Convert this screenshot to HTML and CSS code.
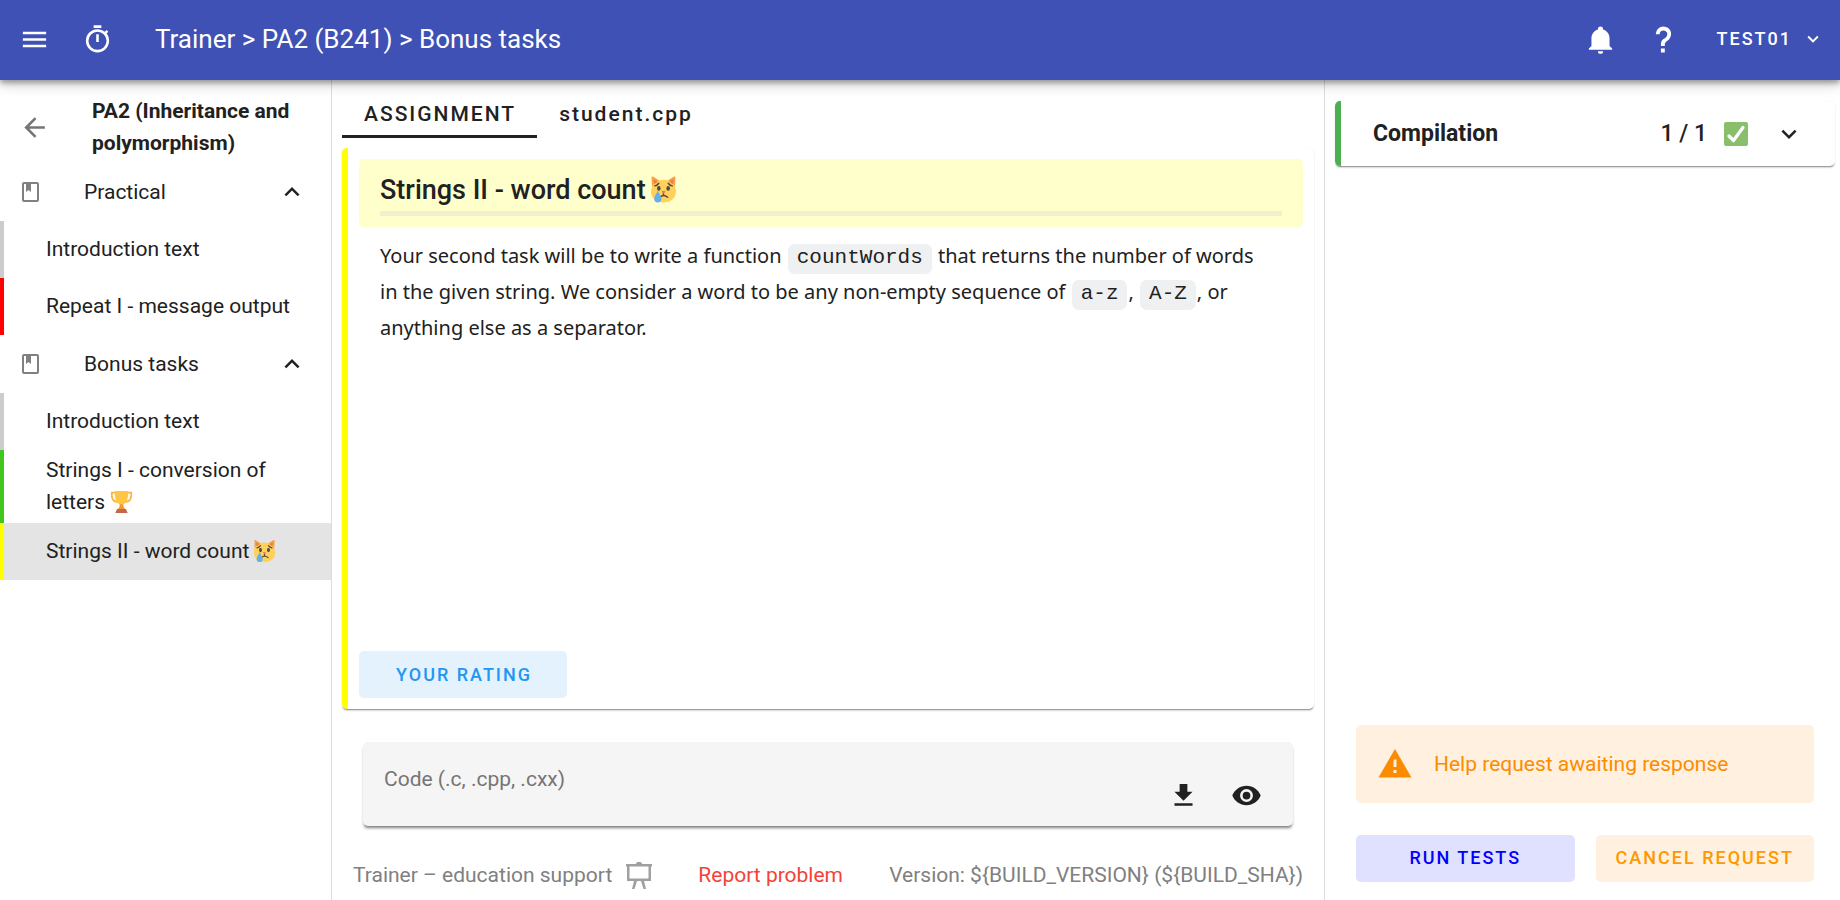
FILE: index.html
```html
<!DOCTYPE html>
<html lang="en">
<head>
<meta charset="utf-8">
<title>Trainer</title>
<link rel="stylesheet" href="styles.css">
</head>
<body>
<svg class="defs" aria-hidden="true">
  <symbol id="cat" viewBox="0 0 26 26">
    <path fill="#f6a24c" d="M2,12L1.500,1.500C1.500,.5 2.500,.3 3.300,.8L10,5H16L22.700,.8C23.500,.3 24.500,.5 24.500,1.500L24,12Z"/>
    <path fill="#ffd15c" d="M13,3.500C20,3.500 25,8.500 25,15C25,21.500 20,25.500 13,25.500C6,25.500 1,21.500 1,15C1,8.500 6,3.500 13,3.500Z"/>
    <path fill="#ec7f3c" d="M3.500,3L4,8L7.500,5.500ZM22.500,3L22,8L18.500,5.500Z"/>
    <path fill="none" stroke="#5b4a33" stroke-width="1.400" stroke-linecap="round" d="M4.500,9.500Q7,9.300 8.500,7M21.500,9.500Q19,9.300 17.500,7M9.500,20.500Q13,17 17,20.500M13,16V18.500"/>
    <ellipse cx="8.500" cy="12" rx="1.700" ry="2.300" fill="#4a4a45"/>
    <ellipse cx="17.500" cy="12" rx="1.700" ry="2.300" fill="#4a4a45"/>
    <path fill="#f2657a" d="M11,14.500H15L13,17Z"/>
    <path fill="#64b1e8" d="M7.500,14C8.500,17 11,19.500 11,22A3.500,3.500 0 0,1 4,22C4,19.500 6.500,17 7.500,14Z"/>
  </symbol>
  <symbol id="cup" viewBox="0 0 26 26">
    <path fill="none" stroke="#ffb636" stroke-width="2" d="M6,2.500H2C1.500,8 3,12.500 8.500,13M20,2.500H24C24.500,8 23,12.500 17.500,13"/>
    <path fill="#ffc645" d="M5.500,.5H20.500C20.500,9 19.500,14 15,15.500V20H11V15.500C6.500,14 5.500,9 5.500,.5Z"/>
    <path fill="#f29a2e" d="M11,15.500H15V18L17.500,21.500H8.500L11,18Z"/>
    <path fill="#c1694f" d="M8,21H18L20,25.500H6Z"/>
  </symbol>
</svg>
<div class="app">
  <header class="topbar">
    <button class="icon-btn" aria-label="Menu"><svg class="icon" viewBox="0 0 24 24"><path d="M3,6H21V8H3V6M3,11H21V13H3V11M3,16H21V18H3V16Z"/></svg></button>
    <button class="icon-btn" aria-label="Timer"><svg class="icon" viewBox="0 0 24 24"><path d="M12,20A7,7 0 0,1 5,13A7,7 0 0,1 12,6A7,7 0 0,1 19,13A7,7 0 0,1 12,20M19.03,7.39L20.45,5.97C20,5.46 19.55,5 19.04,4.56L17.62,6C16.07,4.74 14.12,4 12,4A9,9 0 0,0 3,13A9,9 0 0,0 12,22C17,22 21,17.97 21,13C21,10.88 20.26,8.93 19.03,7.39M11,14H13V8H11M15,1H9V3H15V1Z"/></svg></button>
    <h1 class="topbar-title">Trainer &gt; PA2 (B241) &gt; Bonus tasks</h1>
    <button class="icon-btn" aria-label="Notifications"><svg class="icon" viewBox="0 0 24 24"><path d="M21,19V20H3V19L5,17V11C5,7.9 7.03,5.17 10,4.29C10,4.19 10,4.1 10,4A2,2 0 0,1 12,2A2,2 0 0,1 14,4C14,4.1 14,4.19 14,4.29C16.97,5.17 19,7.9 19,11V17L21,19M14,21A2,2 0 0,1 12,23A2,2 0 0,1 10,21"/></svg></button>
    <button class="icon-btn" aria-label="Help"><svg class="icon" viewBox="0 0 24 24"><path d="M10,19H13V22H10V19M12,2C17.35,2.22 19.68,7.62 16.5,11.67C15.67,12.67 14.33,13.33 13.67,14.17C13,15 13,16 13,17H10C10,15.33 10,13.92 10.67,12.92C11.33,11.92 12.67,11.33 13.5,10.67C15.92,8.43 15.32,5.26 12,5A3,3 0 0,0 9,8H6A6,6 0 0,1 12,2Z"/></svg></button>
    <button class="user-btn">TEST01<svg class="icon-sm" viewBox="0 0 24 24"><path d="M7.41,8.58L12,13.17L16.59,8.58L18,10L12,16L6,10L7.41,8.58Z"/></svg></button>
  </header>

  <nav class="sidebar">
    <div class="course">
      <button class="course-back" aria-label="Back"><svg class="icon" viewBox="0 0 24 24"><path d="M20,11V13H8L13.5,18.5L12.08,19.92L4.16,12L12.08,4.08L13.5,5.5L8,11H20Z"/></svg></button>
      <h2 class="course-title">PA2 (Inheritance and polymorphism)</h2>
    </div>
    <button class="group">
      <svg class="group-icon" viewBox="0 0 17 20"><path fill-rule="evenodd" d="M2,0H15A2,2 0 0,1 17,2V18A2,2 0 0,1 15,20H2A2,2 0 0,1 0,18V2A2,2 0 0,1 2,0M2,2V18H15V2H9V10L6.500,8L4,10V2Z"/></svg>
      <span class="group-name">Practical</span>
      <svg class="icon-md" viewBox="0 0 24 24"><path d="M7.41,15.41L12,10.83L16.59,15.41L18,14L12,8L6,14L7.41,15.41Z"/></svg>
    </button>
    <a class="task" href="#">Introduction text</a>
    <a class="task task-failed" href="#">Repeat I - message output</a>
    <button class="group">
      <svg class="group-icon" viewBox="0 0 17 20"><path fill-rule="evenodd" d="M2,0H15A2,2 0 0,1 17,2V18A2,2 0 0,1 15,20H2A2,2 0 0,1 0,18V2A2,2 0 0,1 2,0M2,2V18H15V2H9V10L6.500,8L4,10V2Z"/></svg>
      <span class="group-name">Bonus tasks</span>
      <svg class="icon-md" viewBox="0 0 24 24"><path d="M7.41,15.41L12,10.83L16.59,15.41L18,14L12,8L6,14L7.41,15.41Z"/></svg>
    </button>
    <a class="task" href="#">Introduction text</a>
    <a class="task task-passed" href="#"><span>Strings I - conversion of letters <svg class="emoji" role="img" aria-label="Trophy"><use href="#cup"/></svg></span></a>
    <a class="task task-partial task-active" href="#"><span>Strings II - word count<svg class="emoji emoji-cat" role="img" aria-label="Crying cat"><use href="#cat"/></svg></span></a>
  </nav>

  <main class="main">
    <div class="tabs">
      <button class="tab tab-active">ASSIGNMENT</button>
      <button class="tab">student.cpp</button>
    </div>
    <section class="assignment">
      <div class="assignment-head">
        <h2 class="assignment-title">Strings II - word count<svg class="emoji emoji-cat emoji-lg" role="img" aria-label="Crying cat"><use href="#cat"/></svg></h2>
      </div>
      <p class="assignment-text">Your second task will be to write a function <code>countWords</code> that returns the number of words in the given string. We consider a word to be any non-empty sequence of <code>a-z</code>, <code>A-Z</code>, or anything else as a separator.</p>
      <button class="btn btn-rating">YOUR RATING</button>
    </section>
    <section class="upload">
      <span class="upload-label">Code (.c, .cpp, .cxx)</span>
      <button class="icon-btn" aria-label="Download"><svg class="icon" viewBox="0 0 24 24"><path d="M5,20H19V18H5M19,9H15V3H9V9H5L12,16L19,9Z"/></svg></button>
      <button class="icon-btn" aria-label="Show"><svg class="icon" viewBox="0 0 24 24"><path d="M12,9A3,3 0 0,0 9,12A3,3 0 0,0 12,15A3,3 0 0,0 15,12A3,3 0 0,0 12,9M12,17A5,5 0 0,1 7,12A5,5 0 0,1 12,7A5,5 0 0,1 17,12A5,5 0 0,1 12,17M12,4.500C7,4.500 2.730,7.610 1,12C2.730,16.390 7,19.500 12,19.500C17,19.500 21.270,16.390 23,12C21.270,7.610 17,4.500 12,4.500Z"/></svg></button>
    </section>
    <footer class="footer">
      <span class="brand">Trainer – education support
        <svg class="brand-icon" viewBox="0 0 26 27"><path fill-rule="evenodd" d="M0,2H10A3,2.200 0 0,1 16,2H26V4.500H25V19H18L20,27H17.500L15,19H11L8.500,27H6L8,19H1V4.500H0V2M3.500,4.500V16.500H22.500V4.500Z"/></svg></span>
      <a class="report" href="#">Report problem</a>
      <span>Version: ${BUILD_VERSION} (${BUILD_SHA})</span>
    </footer>
  </main>

  <aside class="results">
    <button class="result">
      <span class="result-name">Compilation</span>
      <span class="result-score">1 / 1</span>
      <svg class="result-mark" viewBox="0 0 24 24" role="img" aria-label="Passed"><rect width="24" height="24" rx="2" fill="#89be6b"/><path d="M5,14L9.500,18.500L19,5.500" fill="none" stroke="#fff" stroke-width="3.200" stroke-linecap="round" stroke-linejoin="round"/></svg>
      <svg class="icon-md" viewBox="0 0 24 24"><path d="M7.41,8.58L12,13.17L16.59,8.58L18,10L12,16L6,10L7.41,8.58Z"/></svg>
    </button>
    <div class="actions">
      <div class="alert">
        <svg class="alert-icon" viewBox="0 0 24 24"><path d="M13 14H11V9H13M13 18H11V16H13M1 21H23L12 2L1 21Z"/></svg>
        <span>Help request awaiting response</span>
      </div>
      <div class="action-row">
        <button class="btn btn-run">RUN TESTS</button>
        <button class="btn btn-cancel">CANCEL REQUEST</button>
      </div>
    </div>
  </aside>
</div>
</body>
</html>
```
FILE: styles.css
```css
* { box-sizing: border-box; }
body {
  margin: 0;
  font: 21px/32px Roboto, sans-serif;
  color: #212121;
  background: #fff;
}
button {
  margin: 0;
  padding: 0;
  border: 0;
  background: none;
  color: inherit;
  font: inherit;
  cursor: pointer;
}
a { color: inherit; text-decoration: none; }
h1, h2, p { margin: 0; }
svg { display: block; flex: none; fill: currentColor; }
.defs { display: none; }
.icon { width: 31px; height: 31px; }
.icon-md { width: 30px; height: 30px; }
.icon-sm { width: 22px; height: 22px; }
.icon-btn {
  display: grid;
  place-items: center;
  width: 63px;
  height: 60px;
  flex: none;
}
.emoji {
  display: inline-block;
  width: 23px;
  height: 24px;
  vertical-align: -5px;
}
.emoji-cat { margin-left: 4px; }
.emoji-lg { width: 27px; height: 27px; vertical-align: -4px; }

.app {
  display: grid;
  grid-template: 80px minmax(0, 1fr) / 332px minmax(0, 1fr) 516px;
  min-height: 100vh;
}

.topbar {
  grid-column: 1 / -1;
  z-index: 1;
  display: flex;
  align-items: center;
  padding: 0 16px 2px 3px;
  background: #3f51b5;
  color: #fff;
  box-shadow: 0 3px 5px rgba(0,0,0,.3), 0 5px 12px rgba(0,0,0,.18);
}
.topbar-title {
  flex: 1;
  padding-left: 26px;
  font-size: 26px;
  font-weight: 400;
}
.user-btn {
  display: flex;
  align-items: center;
  gap: 10px;
  padding-left: 22px;
  font-size: 18px;
  font-weight: 500;
  letter-spacing: 2px;
}

.sidebar { border-right: 1px solid #ddd; padding-top: 15px; }
.course {
  display: flex;
  align-items: center;
  gap: 42px;
  height: 68px;
  padding: 0 32px 4px 19px;
}
.course-back { color: #757575; }
.course-title { font-size: 21px; font-weight: 700; }
.group {
  display: flex;
  align-items: center;
  width: 100%;
  height: 58px;
  padding: 0 24px 0 22px;
  text-align: left;
}
.group-icon { width: 17px; height: 20px; color: #808080; }
.group-name { flex: 1; padding-left: 45px; }
.task {
  display: flex;
  align-items: center;
  min-height: 57px;
  padding: 4px 32px 5px 42px;
  border-left: 4px solid #ccc;
}
.task-failed { border-color: #f00; }
.task-passed { border-color: #42c51c; }
.task-partial { border-color: #ff0; }
.task-active { background: #e4e4e4; }

.main {
  display: flex;
  flex-direction: column;
  padding: 8px 10px 0;
}
.tabs { display: flex; }
.tab {
  height: 50px;
  padding: 4px 21px 0 22px;
  border-bottom: 3px solid transparent;
  font-weight: 500;
  letter-spacing: 2px;
}
.tab-active { border-color: #212121; }
.assignment {
  flex: 1;
  display: flex;
  flex-direction: column;
  margin-top: 10px;
  padding: 11px;
  border-left: 6px solid #ff0;
  border-radius: 5px;
  box-shadow: 0 2px 2px -1px rgba(0,0,0,.5), 0 0 1px rgba(0,0,0,.1);
}
.assignment-head {
  padding: 15px 21px 11px;
  border-radius: 5px;
  background: #ffffcb;
}
.assignment-title {
  padding-bottom: 5px;
  border-bottom: 5px solid #f4eed0;
  font-size: 27px;
  font-weight: 500;
}
.assignment-text {
  flex: 1;
  padding: 11px 36px 11px 21px;
  font: 20px/36px "Noto Sans", sans-serif;
}
code {
  margin: 0 1px;
  padding: 2px 9px 5px;
  border-radius: 7px;
  background: #eef0f2;
  font: 21px/24px "Liberation Mono", monospace;
}
.btn {
  height: 47px;
  padding-bottom: 1px;
  border-radius: 5px;
  font-size: 18px;
  font-weight: 500;
  letter-spacing: 2px;
}
.btn-rating {
  align-self: flex-start;
  padding: 0 35px 0 37px;
  background: #e3f2fd;
  color: #2196f3;
}
.upload {
  display: flex;
  align-items: flex-end;
  height: 84px;
  margin: 33px 21px 0;
  padding: 0 15px 1px 21px;
  border-radius: 5px;
  background: #f5f5f5;
  box-shadow: 0 3px 3px -1px rgba(0,0,0,.5);
}
.upload-label { flex: 1; align-self: center; padding-bottom: 10px; color: #757575; }
.footer {
  display: flex;
  align-items: center;
  justify-content: space-between;
  height: 74px;
  padding: 24px 11px 0;
  color: #808080;
}
.brand { display: flex; align-items: center; gap: 14px; }
.brand-icon { width: 26px; height: 27px; color: #a0a0a0; }
.report { color: #f44336; }

.results {
  display: flex;
  flex-direction: column;
  justify-content: space-between;
  padding: 21px 5px 18px 10px;
  border-left: 1px solid #ddd;
}
.result {
  display: flex;
  align-items: center;
  height: 65px;
  padding: 0 31px 0 32px;
  border-left: 6px solid #4caf50;
  border-radius: 5px;
  box-shadow: 0 2px 2px -1px rgba(0,0,0,.5), 0 0 1px rgba(0,0,0,.1);
  font-size: 23px;
  font-weight: 700;
  text-align: left;
}
.result-name { flex: 1; }
.result-score { font-weight: 500; }
.result-mark { width: 24px; height: 24px; margin: 0 26px 0 17px; }
.actions { padding: 0 21px; }
.alert {
  display: flex;
  align-items: center;
  gap: 21px;
  height: 78px;
  padding: 0 21px;
  border-radius: 5px;
  background: #fff0df;
  color: #fb8c00;
}
.alert-icon { width: 36px; height: 36px; }
.action-row {
  display: grid;
  grid-template-columns: 1fr 1fr;
  gap: 21px;
  margin-top: 32px;
}
.btn-run { background: #e0e0ff; color: #00f; }
.btn-cancel { background: #fff0df; color: #ff9800; }
```
